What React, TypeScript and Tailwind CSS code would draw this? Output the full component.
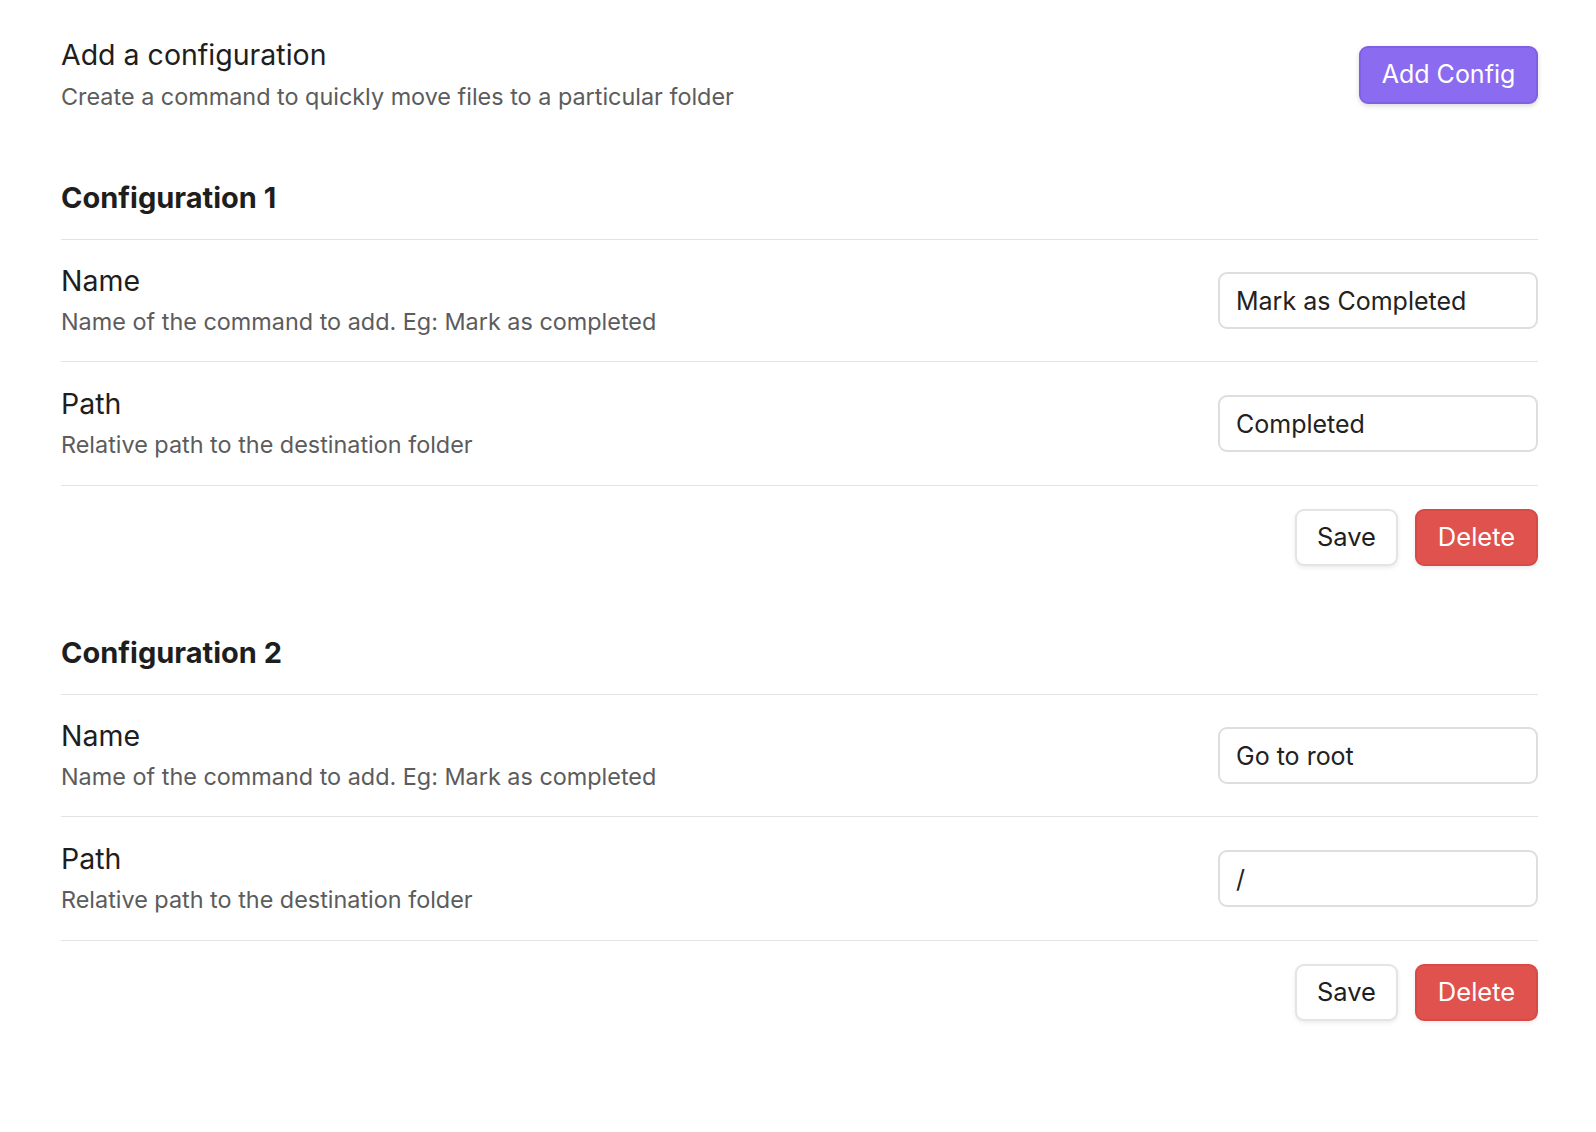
import { useState } from 'react';

type Config = { name: string; path: string };

function SettingRow({
  label,
  desc,
  value,
  onChange,
  height,
}: {
  label: string;
  desc: string;
  value: string;
  onChange: (v: string) => void;
  height: string;
}) {
  return (
    <div className={`flex items-center justify-between border-b border-[#e3e3e3] ${height}`}>
      <div>
        <div className="text-[28.5px] leading-[36px] text-[#1e1e1e]">{label}</div>
        <div className="mt-[6px] text-[23.4px] leading-[34px] text-[#5c5c5c]">{desc}</div>
      </div>
      <input
        value={value}
        onChange={(e) => onChange(e.target.value)}
        className="h-[57px] w-[320px] rounded-[9px] border-[2px] border-[#dedede] bg-white px-[16px] text-[25px] text-[#222] outline-none"
      />
    </div>
  );
}

function ConfigSection({ index, config }: { index: number; config: Config }) {
  const [name, setName] = useState(config.name);
  const [path, setPath] = useState(config.path);

  return (
    <section>
      <h3 className="border-b border-[#e3e3e3] pb-[21px] text-[29px] font-bold leading-[40px] text-[#1e1e1e]">
        Configuration {index}
      </h3>
      <SettingRow
        label="Name"
        desc="Name of the command to add. Eg: Mark as completed"
        value={name}
        onChange={setName}
        height="h-[122px]"
      />
      <SettingRow
        label="Path"
        desc="Relative path to the destination folder"
        value={path}
        onChange={setPath}
        height="h-[124px]"
      />
      <div className="flex justify-end gap-[17px] pt-[23px]">
        <button className="h-[57px] w-[103px] rounded-[9px] border-[2px] border-[#e4e4e4] bg-white text-[25.5px] text-[#1e1e1e] shadow-[0_2px_4px_rgba(0,0,0,0.08)]">
          Save
        </button>
        <button className="h-[57px] w-[123px] rounded-[9px] border-[2px] border-[#d84a46] bg-[#e0524e] text-[25.5px] text-white shadow-[0_2px_4px_rgba(0,0,0,0.08)]">
          Delete
        </button>
      </div>
    </section>
  );
}

export default function App() {
  const configs: Config[] = [
    { name: 'Mark as Completed', path: 'Completed' },
    { name: 'Go to root', path: '/' },
  ];

  return (
    <div className="min-h-screen bg-white pl-[61px] pr-[58px] pt-[35px] font-['Inter','Liberation_Sans',sans-serif]">
      <div className="flex items-center justify-between">
        <div>
          <div className="text-[28.5px] leading-[40px] text-[#1e1e1e]">Add a configuration</div>
          <div className="mt-[4px] text-[23.4px] leading-[36px] text-[#5c5c5c]">
            Create a command to quickly move files to a particular folder
          </div>
        </div>
        <button className="h-[58px] w-[179px] rounded-[9px] border-[2px] border-[#7f5fe3] bg-[#8b6cf0] text-[25px] text-white shadow-[0_2px_5px_rgba(0,0,0,0.15)]">
          Add Config
        </button>
      </div>

      <div className="mt-[63px] flex flex-col gap-[67px]">
        {configs.map((c, i) => (
          <ConfigSection key={i} index={i + 1} config={c} />
        ))}
      </div>
    </div>
  );
}
